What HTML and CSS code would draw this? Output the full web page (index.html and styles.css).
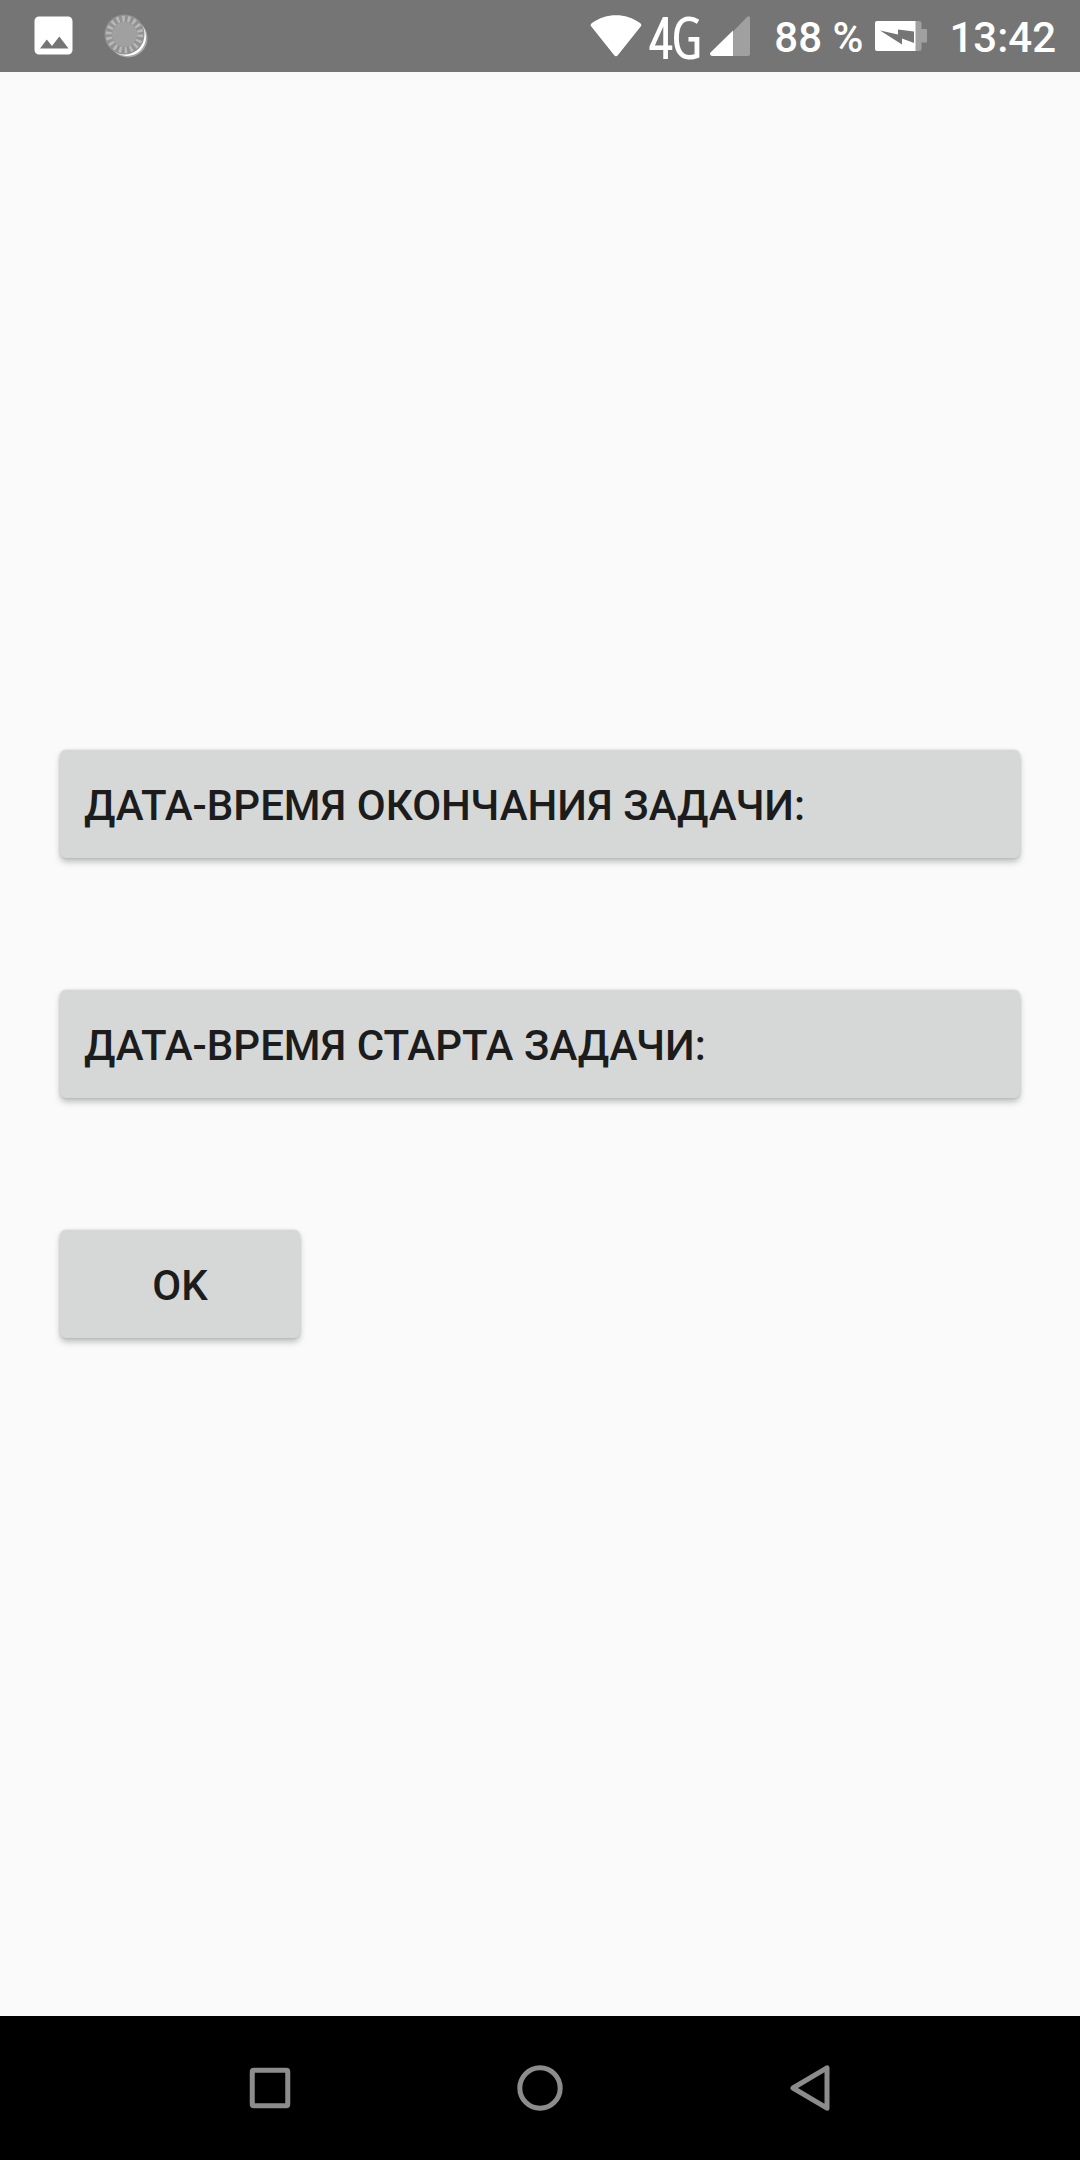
FILE: index.html
```html
<!DOCTYPE html>
<html lang="ru">
<head>
<meta charset="utf-8">
<meta name="viewport" content="width=device-width, initial-scale=1">
<title>Задача</title>
<link rel="stylesheet" href="styles.css">
</head>
<body>
<header class="status-bar">
  <div class="notifications">
    <svg class="icon" width="40" height="40" viewBox="0 0 40 40" aria-hidden="true">
      <path fill="#fff" fill-rule="evenodd" d="M5 .5h29a4.500 4.500 0 0 1 4.500 4.500v29a4.500 4.500 0 0 1-4.500 4.500H5A4.500 4.500 0 0 1 .5 34V5A4.500 4.500 0 0 1 5 .5zM6 32.500h28.500L25.300 20.500l-7.300 9.500-5.200-6.500z"/>
    </svg>
    <svg class="icon" width="46" height="46" viewBox="0 0 46 46" aria-hidden="true">
      <circle cx="24" cy="25" r="19.500" fill="#a6a6a6"/>
      <circle cx="23" cy="24" r="19" fill="#fff"/>
      <circle cx="20.500" cy="21.500" r="20" fill="#929292"/>
      <circle cx="20.500" cy="21.500" r="15.700" fill="none" stroke="#b8b8b8" stroke-width="6" stroke-dasharray="2.500 2.980"/>
      <circle cx="20.500" cy="21.500" r="12.500" fill="#a0a0a0"/>
    </svg>
  </div>
  <div class="indicators">
    <svg class="icon" width="52" height="44" viewBox="0 0 52 44" aria-hidden="true">
      <path fill="#fff" d="M1.300 12.500Q-.3 10.500 2 9C16-1.500 36-1.500 50 9q2.300 1.500.7 3.500L28 41q-2 2.400-4 0z"/>
    </svg>
    <span class="network">4G</span>
    <svg class="icon signal" width="40" height="40" viewBox="0 0 40 40" aria-hidden="true">
      <path fill="#a0a0a0" d="M23 15.500 37 1q3-2 3 1.500V38q0 2-2 2H23z"/>
      <path fill="#fff" d="M23 14.500V40H2q-3-1-1.500-3.500z"/>
    </svg>
    <span class="battery-level">88 %</span>
    <svg class="icon battery" width="52" height="30" viewBox="0 0 52 30" aria-hidden="true">
      <path fill="#a0a0a0" d="M40 0h4q2.500 0 2.500 2.500V8H52v13.500h-5.500v6q0 2.500-2.500 2.500h-4z"/>
      <path fill="#fff" d="M2 0h38.500v30H2q-2 0-2-2V2q0-2 2-2z"/>
      <path fill="#757575" d="M5 9.500 23 13.500V8.500L39 10.500V22l-12-4.500v6z"/>
    </svg>
    <time class="clock">13:42</time>
  </div>
</header>
<main class="task-dates">
  <button class="button button-wide" type="button">ДАТА-ВРЕМЯ ОКОНЧАНИЯ ЗАДАЧИ:</button>
  <button class="button button-wide" type="button">ДАТА-ВРЕМЯ СТАРТА ЗАДАЧИ:</button>
  <button class="button button-ok" type="button">OK</button>
</main>
<nav class="nav-bar" aria-label="Навигация">
  <button class="nav-button" type="button" aria-label="Обзор">
    <svg width="48" height="48" viewBox="0 0 48 48"><rect x="6.250" y="6.250" width="35.500" height="35.500" rx="1.500" fill="none" stroke="#8c8c8c" stroke-width="5"/></svg>
  </button>
  <button class="nav-button" type="button" aria-label="Домой">
    <svg width="48" height="48" viewBox="0 0 48 48"><circle cx="24" cy="24" r="20.200" fill="none" stroke="#8c8c8c" stroke-width="5"/></svg>
  </button>
  <button class="nav-button" type="button" aria-label="Назад">
    <svg width="48" height="48" viewBox="0 0 48 48"><path d="M7 24 41 3.800v40.400z" fill="none" stroke="#8c8c8c" stroke-width="5" stroke-linejoin="round"/></svg>
  </button>
</nav>
</body>
</html>
```
FILE: styles.css
```css
* {
  box-sizing: border-box;
}

body {
  margin: 0;
  min-height: 100vh;
  display: flex;
  flex-direction: column;
  background: #fafafa;
  color: #1c1c1c;
  font-family: Roboto, "Liberation Sans", sans-serif;
  font-size: 42px;
  font-weight: 500;
  line-height: 48px;
}

.status-bar {
  display: flex;
  justify-content: space-between;
  height: 72px;
  padding: 0 24px 0 34px;
  background: #757575;
  color: #fff;
}

.notifications,
.indicators {
  display: flex;
  align-items: center;
}

.notifications {
  gap: 30px;
}

.icon {
  display: block;
  flex: none;
}

.network {
  margin: 0 9px 0 8px;
  font-family: "Open Sans Condensed Light", "Liberation Sans Narrow", "Roboto Condensed", Roboto, sans-serif;
  font-size: 56px;
  font-weight: 400;
  -webkit-text-stroke: 2px #fff;
}

.battery-level,
.clock {
  padding-top: 3px;
}

.battery-level {
  margin: 0 12px 0 24px;
}

.battery {
  margin-right: 22px;
}

.task-dates {
  flex: 1;
  display: flex;
  flex-direction: column;
  justify-content: center;
  align-items: flex-start;
  gap: 132px;
  padding: 0 60px;
}

.button {
  height: 108px;
  padding: 4px 24px 0;
  border: 0;
  border-radius: 6px;
  background: #d6d8d7;
  box-shadow: 0 4px 6px rgba(0, 0, 0, 0.24), 0 0 3px rgba(0, 0, 0, 0.14);
  color: inherit;
  font: inherit;
  text-align: left;
}

.button-wide {
  width: 100%;
}

.button-ok {
  min-width: 240px;
  text-align: center;
}

.nav-bar {
  display: flex;
  justify-content: center;
  height: 144px;
  background: #000;
}

.nav-button {
  flex: 0 1 25%;
  display: flex;
  align-items: center;
  justify-content: center;
  padding: 0;
  border: 0;
  background: transparent;
}
```
